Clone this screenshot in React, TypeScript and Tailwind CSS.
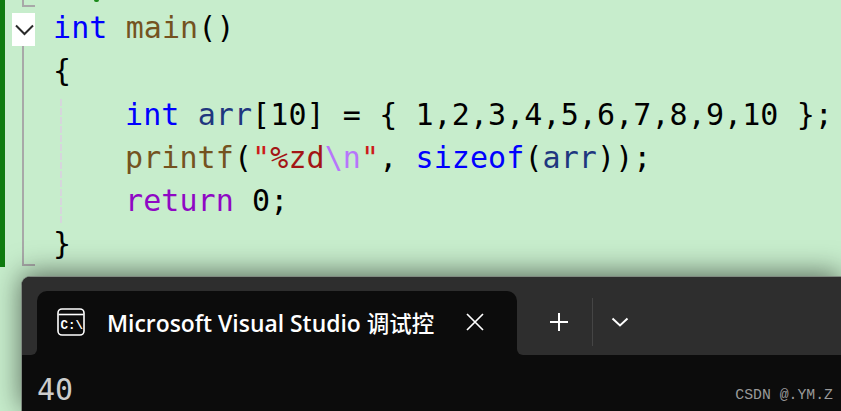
import React from "react";

const KW = "text-[#0000ff]";
const FN = "text-[#74531f]";
const TY = "text-[#1f377f]";
const STR = "text-[#a31515]";
const QUOTE = "text-[#cc1a1a]";
const ESC = "text-[#b776fb]";
const CTL = "text-[#8f08c4]";

function Line({ indent, children }: { indent?: boolean; children: React.ReactNode }) {
  return (
    <div className={`h-[43.3px] leading-[43.3px] whitespace-pre ${indent ? "pl-[72px]" : ""}`}>{children}</div>
  );
}

export default function App() {
  return (
    <div className="relative flex h-[411px] w-[841px] flex-col overflow-hidden bg-[#c7edcc]">
      {/* Editor */}
      <div className="relative flex h-[276px] shrink-0">
        <div className="h-[267px] w-[5px] shrink-0 bg-[#107c10]" />

        {/* outline guides */}
        <div className="absolute left-[22px] top-0 h-[7px] w-[13px] border-b-2 border-l-2 border-[#a8a8a8]" />
        <div className="absolute left-[22px] top-[40px] h-[226px] w-[13px] border-b-2 border-l-2 border-[#a8a8a8]" />
        <div className="absolute left-[12px] top-[13px] flex h-[33px] w-[23px] items-center justify-center bg-white pl-[2px]">
          <svg width="19" height="12" viewBox="0 0 19 12" fill="none" stroke="#2a2a2a" strokeWidth="2">
            <path d="M1 1.5 9.5 10 18 1.5" />
          </svg>
        </div>
        <div className="absolute left-[60px] top-[99px] h-[124px] w-[2px] bg-[repeating-linear-gradient(to_bottom,#d6d6dc_0,#d6d6dc_7px,transparent_7px,transparent_9px)]" />
        <div className="absolute left-[94px] top-0 h-[2px] w-[5px] rounded-b bg-[#1a8a1a]" />

        <div className="pl-[48px] pt-[6px] font-['DejaVu_Sans_Mono',monospace] text-[30px] tracking-[0.09px] text-black">
          <Line>
            <span className={KW}>int</span> <span className={FN}>main</span>()
          </Line>
          <Line>{"{"}</Line>
          <Line indent>
            <span className={KW}>int</span> <span className={TY}>arr</span>[10] = {"{"} 1,2,3,4,5,6,7,8,9,10 {"}"};
          </Line>
          <Line indent>
            <span className={FN}>printf</span>(<span className={QUOTE}>"</span>
            <span className={STR}>%zd</span>
            <span className={ESC}>\n</span>
            <span className={QUOTE}>"</span>, <span className={KW}>sizeof</span>(<span className={TY}>arr</span>));
          </Line>
          <Line indent>
            <span className={CTL}>return</span> 0;
          </Line>
          <Line>{"}"}</Line>
        </div>
      </div>

      {/* Terminal window */}
      <div className="relative z-10 ml-[21px] flex min-h-0 flex-1 flex-col rounded-tl-[9px] border-l border-t border-[#7f8a80] bg-[#0c0c0c] shadow-[0_-3px_28px_rgba(0,0,0,0.55)]">
        <div className="flex h-[78px] shrink-0">
          <div className="w-[15px] shrink-0 rounded-br-[6px] rounded-tl-[8px] bg-[#2e2e2e]" />
          <div className="w-[480px] shrink-0 bg-[#2e2e2e]">
            <div className="mt-[14px] flex h-[64px] items-center rounded-t-[10px] bg-[#0c0c0c] pb-[2px] pl-[20px]">
              <svg width="28" height="28" viewBox="0 0 28 28" fill="none" className="shrink-0">
                <rect x="1" y="1" width="26" height="26" rx="4" stroke="white" strokeWidth="1.6" />
                <path d="M1.5 6.5h25" stroke="white" strokeWidth="1.6" />
                <text x="3.5" y="21" fill="white" fontSize="12.5" fontWeight="700" fontFamily="'Liberation Mono', monospace">C:\</text>
              </svg>
              <span className="ml-[22px] w-[329px] whitespace-nowrap pt-[5px] font-['Open_Sans','Noto_Sans_CJK_SC',sans-serif] text-[22.9px] font-semibold leading-none text-white">
                Microsoft Visual Studio <span className="text-[22.5px] font-medium">调试控</span>
              </span>
              <svg width="18" height="18" viewBox="0 0 18 18" fill="none" stroke="white" strokeWidth="1.7" className="ml-[30px] shrink-0">
                <path d="M1 1l16 16M17 1 1 17" />
              </svg>
            </div>
          </div>
          <div className="flex min-w-0 flex-1 items-center rounded-bl-[6px] bg-[#2e2e2e] pt-[12px]">
            <svg width="20" height="20" viewBox="0 0 20 20" fill="none" stroke="white" strokeWidth="2" className="ml-[32px] shrink-0">
              <path d="M10 1v18M1 10h18" />
            </svg>
            <div className="ml-[23px] h-[48px] w-px shrink-0 bg-[#454545]" />
            <svg width="18" height="10" viewBox="0 0 18 10" fill="none" stroke="white" strokeWidth="2" className="ml-[18px] shrink-0">
              <path d="M1.5 1.5 9 8.5 16.5 1.5" />
            </svg>
          </div>
        </div>
        <div className="pl-[15px] pt-[15px] font-['DejaVu_Sans_Mono',monospace] text-[30px] leading-[40px] text-[#cccccc]">40</div>
      </div>

      {/* watermark */}
      <div className="absolute bottom-[8px] right-[8px] z-20 font-['Liberation_Mono',monospace] text-[14.8px] leading-none text-[#9a9a9a]">
        CSDN @.YM.Z
      </div>
    </div>
  );
}
